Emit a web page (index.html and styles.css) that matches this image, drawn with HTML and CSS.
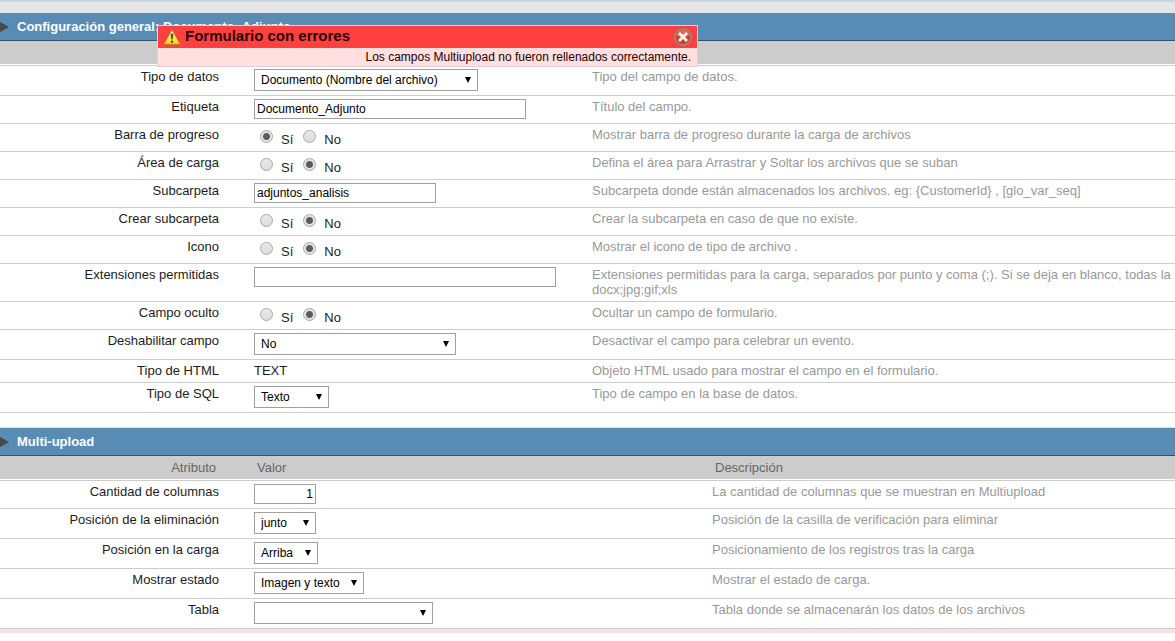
FILE: index.html
```html
<!DOCTYPE html>
<html lang="es">
<head>
<meta charset="utf-8">
<title>Configuración general: Documento_Adjunto</title>
<link rel="stylesheet" href="styles.css">
</head>
<body>
<div class="topbar"></div>

<section class="alert" role="alert">
  <header class="alert-head">
    <svg class="alert-icon" viewBox="0 0 18 16" aria-hidden="true">
      <defs><linearGradient id="warn" x1="0" y1="0" x2="0" y2="1"><stop offset="0" stop-color="#fff9a0"/><stop offset="1" stop-color="#ffd400"/></linearGradient></defs>
      <path d="M9 .7 L17.3 15.3 H.7 Z" fill="url(#warn)" stroke="#b08428" stroke-linejoin="round"/>
      <path d="M7.6 5.2 Q9 3.8 10.4 5.2 L9.6 10.5 H8.4 Z" fill="#4c4c3c"/>
      <circle cx="9" cy="12.7" r="1.2" fill="#4c4c3c"/>
    </svg>
    <h2 class="alert-title">Formulario con errores</h2>
    <button class="alert-close" type="button" aria-label="Cerrar">
      <svg viewBox="0 0 18 18" aria-hidden="true">
        <circle cx="9" cy="9" r="8" fill="#d83a24" stroke="#a08078" stroke-width="1.8"/>
        <path d="M2.5 8 A6.5 6.5 0 0 1 15.5 8 Q9 10 2.5 8Z" fill="#d96a58"/>
        <path d="M6 6 L12 12 M12 6 L6 12" stroke="#fff3ee" stroke-width="2.8" stroke-linecap="square"/>
      </svg>
    </button>
  </header>
  <p class="alert-text">Los campos Multiupload no fueron rellenados correctamente.</p>
</section>

<form>
<section class="block">
  <h1 class="bar">Configuración general: Documento_Adjunto</h1>
  <table class="props">
    <colgroup><col class="col-label"><col class="col-value"><col></colgroup>
    <thead><tr><th class="name">Atributo</th><th>Valor</th><th>Descripción</th></tr></thead>
    <tbody>
      <tr><td class="name"><label for="tipo">Tipo de datos</label></td>
        <td><select id="tipo" class="w-224"><option>Documento (Nombre del archivo)</option></select></td>
        <td class="desc">Tipo del campo de datos.</td></tr>
      <tr><td class="name"><label for="etiqueta">Etiqueta</label></td>
        <td><input id="etiqueta" class="text w-272" type="text" value="Documento_Adjunto"></td>
        <td class="desc">Título del campo.</td></tr>
      <tr><td class="name" id="l-barra">Barra de progreso</td>
        <td><div class="radios" role="radiogroup" aria-labelledby="l-barra"><label><input type="radio" name="barra" checked>Sí</label><label><input type="radio" name="barra">No</label></div></td>
        <td class="desc">Mostrar barra de progreso durante la carga de archivos</td></tr>
      <tr><td class="name" id="l-area">Área de carga</td>
        <td><div class="radios" role="radiogroup" aria-labelledby="l-area"><label><input type="radio" name="area">Sí</label><label><input type="radio" name="area" checked>No</label></div></td>
        <td class="desc">Defina el área para Arrastrar y Soltar los archivos que se suban</td></tr>
      <tr><td class="name"><label for="sub">Subcarpeta</label></td>
        <td><input id="sub" class="text w-182" type="text" value="adjuntos_analisis"></td>
        <td class="desc">Subcarpeta donde están almacenados los archivos. eg: {CustomerId} , [glo_var_seq]</td></tr>
      <tr><td class="name" id="l-crear">Crear subcarpeta</td>
        <td><div class="radios" role="radiogroup" aria-labelledby="l-crear"><label><input type="radio" name="crear">Sí</label><label><input type="radio" name="crear" checked>No</label></div></td>
        <td class="desc">Crear la subcarpeta en caso de que no existe.</td></tr>
      <tr><td class="name" id="l-icono">Icono</td>
        <td><div class="radios" role="radiogroup" aria-labelledby="l-icono"><label><input type="radio" name="icono">Sí</label><label><input type="radio" name="icono" checked>No</label></div></td>
        <td class="desc">Mostrar el icono de tipo de archivo .</td></tr>
      <tr><td class="name"><label for="ext">Extensiones permitidas</label></td>
        <td><input id="ext" class="text w-302" type="text"></td>
        <td class="desc">Extensiones permitidas para la carga, separados por punto y coma (;). Si se deja en blanco, todas la<br>docx;jpg;gif;xls</td></tr>
      <tr><td class="name" id="l-oculto">Campo oculto</td>
        <td><div class="radios" role="radiogroup" aria-labelledby="l-oculto"><label><input type="radio" name="oculto">Sí</label><label><input type="radio" name="oculto" checked>No</label></div></td>
        <td class="desc">Ocultar un campo de formulario.</td></tr>
      <tr><td class="name"><label for="desh">Deshabilitar campo</label></td>
        <td><select id="desh" class="w-202"><option>No</option></select></td>
        <td class="desc">Desactivar el campo para celebrar un evento.</td></tr>
      <tr><td class="name">Tipo de HTML</td>
        <td>TEXT</td>
        <td class="desc">Objeto HTML usado para mostrar el campo en el formulario.</td></tr>
      <tr><td class="name"><label for="sql">Tipo de SQL</label></td>
        <td><select id="sql" class="w-75"><option>Texto</option></select></td>
        <td class="desc">Tipo de campo en la base de datos.</td></tr>
    </tbody>
  </table>
</section>

<section class="block block-upload">
  <h1 class="bar">Multi-upload</h1>
  <table class="props">
    <colgroup><col class="col-label"><col class="col-value-wide"><col></colgroup>
    <thead><tr><th class="name">Atributo</th><th>Valor</th><th>Descripción</th></tr></thead>
    <tbody>
      <tr><td class="name"><label for="cols">Cantidad de columnas</label></td>
        <td><input id="cols" class="text number w-62" type="text" value="1"></td>
        <td class="desc">La cantidad de columnas que se muestran en Multiupload</td></tr>
      <tr><td class="name"><label for="elim">Posición de la eliminación</label></td>
        <td><select id="elim" class="w-62"><option>junto</option></select></td>
        <td class="desc">Posición de la casilla de verificación para eliminar</td></tr>
      <tr><td class="name"><label for="pos">Posición en la carga</label></td>
        <td><select id="pos" class="w-64"><option>Arriba</option></select></td>
        <td class="desc">Posicionamiento de los registros tras la carga</td></tr>
      <tr><td class="name"><label for="estado">Mostrar estado</label></td>
        <td><select id="estado" class="w-110"><option>Imagen y texto</option></select></td>
        <td class="desc">Mostrar el estado de carga.</td></tr>
      <tr><td class="name"><label for="tabla">Tabla</label></td>
        <td><select id="tabla" class="w-179"><option></option></select></td>
        <td class="desc">Tabla donde se almacenarán los datos de los archivos</td></tr>
    </tbody>
  </table>
  <div class="error-row"></div>
</section>
</form>
</body>
</html>
```

FILE: styles.css
```css
* { box-sizing: border-box; }

body {
  margin: 0;
  overflow: hidden;
  position: relative;
  background: #fff;
  color: #1c1c1c;
  font: 13px/15px "Liberation Sans", Arial, sans-serif;
}

.topbar {
  height: 13px;
  background: #e6e6e6;
  border-top: 2px solid #ccd5dc;
}

/* Section title bar */
.bar {
  display: flex;
  align-items: center;
  gap: 8px;
  height: 28px;
  margin: 0;
  background: #588cb5;
  border-bottom: 1px solid #34506a;
  color: #fff;
  font-size: 13px;
  line-height: 15px;
}
.bar::before {
  content: "";
  border-left: 9px solid #484848;
  border-top: 5px solid transparent;
  border-bottom: 5px solid transparent;
}

.block-upload {
  margin-top: 14px;
  border-top: 1px solid #ddd;
}

/* Attribute tables */
.props {
  width: 100%;
  table-layout: fixed;
  border-spacing: 0;
  border-bottom: 1px solid #ccc;
}
.col-label { width: 254px; }
.col-value { width: 338px; }
.col-value-wide { width: 458px; }

th {
  padding: 4px 3px;
  background: #ccc;
  border-bottom: 1px solid #fff;
  color: #666;
  font-weight: normal;
  text-align: left;
}
th.name { padding-right: 38px; text-align: right; }

td {
  padding: 3px 0 4px;
  border-top: 1px solid #ccc;
  vertical-align: top;
  white-space: nowrap;
}
td.name { padding-right: 35px; text-align: right; }
td.desc { color: #999; }

/* Controls */
.text, select {
  display: block;
  margin: 0;
  background: #fff;
  border: 1px solid #a0a0a0;
  border-radius: 0;
  color: #000;
  font: 12px/14px "Liberation Sans", Arial, sans-serif;
}
.text { height: 20px; padding: 1px 2px; }
.number { text-align: right; }
select {
  height: 22px;
  padding: 0 18px 0 6px;
  appearance: none;
  background: #fff url("data:image/svg+xml,%3Csvg xmlns='http://www.w3.org/2000/svg' width='6' height='6'%3E%3Cpath d='M0 0h6L3 6z'/%3E%3C/svg%3E") no-repeat right 6px center;
}

.w-62 { width: 62px; }
.w-64 { width: 64px; }
.w-75 { width: 75px; }
.w-110 { width: 110px; }
.w-179 { width: 179px; }
.w-182 { width: 182px; }
.w-202 { width: 202px; }
.w-224 { width: 224px; }
.w-272 { width: 272px; }
.w-302 { width: 302px; }

.radios {
  display: flex;
  align-items: flex-end;
  gap: 10px;
  height: 20px;
  padding-left: 6px;
}
.radios label { display: flex; align-items: flex-end; gap: 8px; }
.radios input {
  appearance: none;
  width: 13px;
  height: 13px;
  margin: 0 0 4px;
  border: 1px solid #a8a8a8;
  border-radius: 50%;
  background: linear-gradient(#e9e9e9, #dcdcdc);
}
.radios input:checked {
  background: radial-gradient(circle, #5c5c5c 3px, #e4e4e4 4px);
}

.error-row { height: 4px; background: #fae0e0; }

/* Floating error message */
.alert {
  position: absolute;
  z-index: 1;
  top: 25px;
  left: 157px;
  width: 541px;
  border: 1px solid #e0d0d0;
  background: #ffdfdf;
}
.alert-head {
  display: flex;
  align-items: center;
  gap: 4px;
  height: 22px;
  padding: 0 5px;
  background: #ff4040;
}
.alert-icon { width: 18px; height: 16px; }
.alert-title {
  flex: 1;
  margin: 0;
  padding-bottom: 2px;
  color: #2a0505;
  font-size: 15px;
  line-height: 18px;
}
.alert-close {
  width: 18px;
  height: 18px;
  padding: 0;
  border: 0;
  background: none;
}
.alert-close svg { display: block; }
.alert-text {
  margin: 0;
  padding: 2px 6px 1px;
  color: #200;
  font-size: 12px;
  text-align: right;
}
```
